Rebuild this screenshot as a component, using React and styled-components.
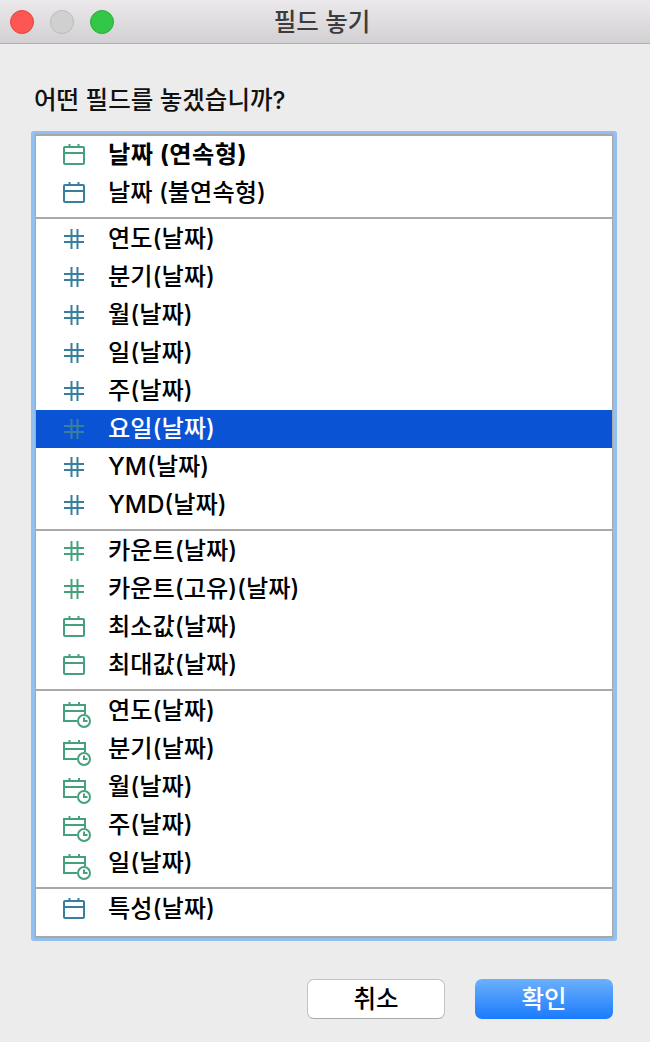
import React from "react";
import styled, { createGlobalStyle } from "styled-components";

const GROUPS = [
  [
    { icon: "calendar", tone: "green", label: "날짜 (연속형)", bold: true },
    { icon: "calendar", tone: "blue", label: "날짜 (불연속형)" },
  ],
  [
    { icon: "hash", tone: "blue", label: "연도(날짜)" },
    { icon: "hash", tone: "blue", label: "분기(날짜)" },
    { icon: "hash", tone: "blue", label: "월(날짜)" },
    { icon: "hash", tone: "blue", label: "일(날짜)" },
    { icon: "hash", tone: "blue", label: "주(날짜)" },
    { icon: "hash", tone: "blue", label: "요일(날짜)", selected: true },
    { icon: "hash", tone: "blue", label: "YM(날짜)" },
    { icon: "hash", tone: "blue", label: "YMD(날짜)" },
  ],
  [
    { icon: "hash", tone: "green", label: "카운트(날짜)" },
    { icon: "hash", tone: "green", label: "카운트(고유)(날짜)" },
    { icon: "calendar", tone: "green", label: "최소값(날짜)" },
    { icon: "calendar", tone: "green", label: "최대값(날짜)" },
  ],
  [
    { icon: "clock", tone: "green", label: "연도(날짜)" },
    { icon: "clock", tone: "green", label: "분기(날짜)" },
    { icon: "clock", tone: "green", label: "월(날짜)" },
    { icon: "clock", tone: "green", label: "주(날짜)" },
    { icon: "clock", tone: "green", label: "일(날짜)" },
  ],
  [{ icon: "calendar", tone: "blue", label: "특성(날짜)" }],
];

const TONES = { green: "#44a17c", blue: "#387f9f" };

const CalendarIcon = ({ color }) => (
  <svg width="22" height="22" viewBox="0 0 22 22" fill="none" stroke={color} strokeWidth="2">
    <rect x="1" y="3" width="20" height="17" rx="1" />
    <path d="M1 9h20M6.5 0v4M15.5 0v4" />
  </svg>
);

const HashIcon = ({ color }) => (
  <svg width="22" height="22" viewBox="0 0 22 22" fill="none" stroke={color} strokeWidth="2">
    <path d="M8.5 1v20M14.5 1v20M1 8h20M1 14h20" />
  </svg>
);

const ClockCalendarIcon = ({ color }) => (
  <svg width="30" height="36" viewBox="0 0 30 36" fill="none" stroke={color} strokeWidth="2">
    <path d="M14 28H1V12h21v9M1 18h21M6.5 9v4M16 9v4" />
    <circle cx="21" cy="28" r="6" fill="#fff" />
    <path d="M21 24.5V28h3.5" />
  </svg>
);

const ICONS = { calendar: CalendarIcon, hash: HashIcon, clock: ClockCalendarIcon };

const App = () => {
  return (
    <>
      <GlobalStyle />
      <Window>
        <TitleBar>
          <Lights>
            <Light $bg="#fc5753" $border="#e0443e" />
            <Light $bg="#d0d0d0" $border="#bcbcbc" />
            <Light $bg="#33c748" $border="#2aac3a" />
          </Lights>
          <Title>필드 놓기</Title>
        </TitleBar>
        <Body>
          <Prompt>어떤 필드를 놓겠습니까?</Prompt>
          <ListFrame>
            <ListBox>
              {GROUPS.map((group, i) => (
                <Group key={i}>
                  {group.map((item) => {
                    const Icon = ICONS[item.icon];
                    return (
                      <Row key={item.label} $selected={item.selected}>
                        <IconSlot>
                          <Icon color={TONES[item.tone]} />
                        </IconSlot>
                        <Label $bold={item.bold}>{item.label}</Label>
                      </Row>
                    );
                  })}
                </Group>
              ))}
            </ListBox>
          </ListFrame>
          <Buttons>
            <CancelButton>취소</CancelButton>
            <OkButton>확인</OkButton>
          </Buttons>
        </Body>
      </Window>
    </>
  );
};

export default App;

const GlobalStyle = createGlobalStyle`
  html, body {
    margin: 0;
    padding: 0;
    background: #ececec;
  }
  body {
    font-family: Inter, "Noto Sans CJK KR", sans-serif;
  }
`;

const Window = styled.div`
  width: 650px;
  height: 1042px;
  overflow: hidden;
  background: #ececec;
`;

const TitleBar = styled.div`
  position: relative;
  height: 43px;
  display: flex;
  align-items: center;
  justify-content: center;
  background: linear-gradient(#ebe9eb, #d2d0d2);
  border-bottom: 1px solid #b0aeb0;
`;

const Lights = styled.div`
  position: absolute;
  left: 10px;
  top: 10px;
  display: flex;
  gap: 16px;
`;

const Light = styled.span`
  width: 24px;
  height: 24px;
  box-sizing: border-box;
  border-radius: 50%;
  background: ${(props) => props.$bg};
  border: 1px solid ${(props) => props.$border};
`;

const Title = styled.div`
  font-size: 24.5px;
  font-weight: 500;
  line-height: 30px;
  color: #3c3c3c;
  padding-right: 6px;
`;

const Body = styled.div`
  padding: 39px 33px 0 31px;
`;

const Prompt = styled.div`
  padding-left: 3px;
  font-size: 24.5px;
  font-weight: 500;
  line-height: 34px;
  color: #111;
`;

const ListFrame = styled.div`
  margin-top: 14px;
  padding: 3px 4px;
  background: #93bef0;
  border-radius: 3px;
`;

const ListBox = styled.div`
  height: 804px;
  box-sizing: border-box;
  background: #fff;
  border: 1px solid #a8a8a8;
  border-top-width: 2px;
  border-bottom-width: 2px;
`;

const Group = styled.div`
  padding-bottom: 5px;
  margin-bottom: 1px;
  border-bottom: 2px solid #a9a9a9;
  &:last-child {
    border-bottom: none;
    padding-bottom: 0;
    margin-bottom: 0;
  }
`;

const Row = styled.div`
  height: 38px;
  display: flex;
  align-items: center;
  padding-left: 27px;
  background: ${(props) => (props.$selected ? "#0a53d4" : "transparent")};
  color: ${(props) => (props.$selected ? "#fff" : "#000")};
`;

const IconSlot = styled.div`
  width: 45px;
  display: flex;
  align-items: center;
`;

const Label = styled.div`
  font-size: 24.2px;
  line-height: 34px;
  font-weight: ${(props) => (props.$bold ? 700 : 500)};
  letter-spacing: ${(props) => (props.$bold ? "0.5px" : "0")};
  white-space: nowrap;
`;

const Buttons = styled.div`
  margin-top: 38px;
  padding-right: 4px;
  display: flex;
  justify-content: flex-end;
  gap: 30px;
`;

const CancelButton = styled.button`
  width: 138px;
  height: 40px;
  padding: 0;
  box-sizing: border-box;
  font-family: inherit;
  font-size: 24.5px;
  font-weight: 500;
  line-height: 34px;
  color: #000;
  background: #fff;
  border: 1px solid #c2c2c2;
  border-bottom-color: #aaa;
  border-radius: 7px;
`;

const OkButton = styled(CancelButton)`
  color: #fff;
  background: linear-gradient(#6cb0fb, #1a7bfd);
  border: none;
`;
